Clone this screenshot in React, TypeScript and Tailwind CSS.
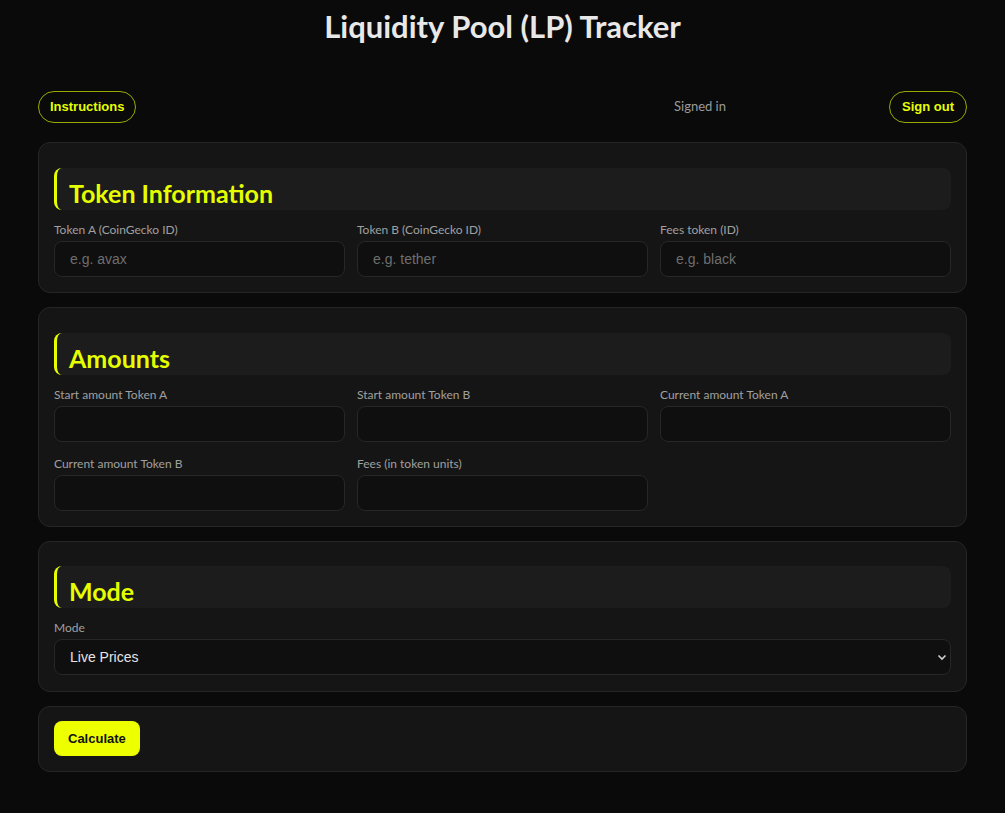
import React from 'react';

const sans = { fontFamily: 'Lato, "Noto Sans", sans-serif' };
const arial = { fontFamily: '"Liberation Sans", Arial, sans-serif' };

const SectionTitle: React.FC<{ title: string }> = ({ title }) => (
    <div className="h-[42px] rounded-lg bg-[#1c1c1c] border-l-[3px] border-[#e6ff00] pl-[12px] flex items-end pb-[2px] mb-[13px]">
        <h2 className="text-[25px] leading-[30px] font-bold text-[#e6ff00]" style={sans}>{title}</h2>
    </div>
);

const Field: React.FC<{ label: string; placeholder?: string }> = ({ label, placeholder }) => (
    <div className="flex flex-col">
        <label className="text-[12px] leading-[14px] text-[#a0a0a0] mb-[4px]" style={sans}>{label}</label>
        <input
            placeholder={placeholder}
            className="h-[36px] rounded-lg bg-[#0f0f0f] border border-[#272727] px-[15px] text-[14px] text-[#e5e5e5] placeholder-[#6e6e6e] outline-none"
            style={arial}
        />
    </div>
);

const Card: React.FC<{ children: React.ReactNode; className?: string }> = ({ children, className }) => (
    <section className={`rounded-xl bg-[#151515] border border-[#262626] px-[15px] ${className ?? ''}`}>
        {children}
    </section>
);

const App: React.FC = () => {
    return (
        <div className="min-h-[813px] bg-[#0a0a0a] text-[#e5e5e5]">
            <div className="w-[929px] ml-[38px]">
                <h1 className="text-center text-[31px] leading-[40px] font-bold text-[#e8e8e8] pt-[6px]" style={sans}>
                    Liquidity Pool (LP) Tracker
                </h1>

                <div className="flex items-center justify-between mt-[45px]">
                    <button
                        className="h-[32px] px-[11px] rounded-full border border-[#9aaa00] text-[#e6ff00] text-[13px] font-bold"
                        style={arial}
                    >
                        Instructions
                    </button>
                    <div className="flex items-center gap-[163px]">
                        <span className="text-[13px] text-[#9a9a9a]" style={sans}>Signed in</span>
                        <button
                            className="h-[32px] px-[12px] rounded-full border border-[#9aaa00] text-[#e6ff00] text-[13px] font-bold"
                            style={arial}
                        >
                            Sign out
                        </button>
                    </div>
                </div>

                <div className="flex flex-col gap-[14px] mt-[19px] pb-[40px]">
                    <Card className="pt-[25px] pb-[15px]">
                        <SectionTitle title="Token Information" />
                        <div className="grid grid-cols-3 gap-x-[12px]">
                            <Field label="Token A (CoinGecko ID)" placeholder="e.g. avax" />
                            <Field label="Token B (CoinGecko ID)" placeholder="e.g. tether" />
                            <Field label="Fees token (ID)" placeholder="e.g. black" />
                        </div>
                    </Card>

                    <Card className="pt-[25px] pb-[15px]">
                        <SectionTitle title="Amounts" />
                        <div className="grid grid-cols-3 gap-x-[12px] gap-y-[15px]">
                            <Field label="Start amount Token A" />
                            <Field label="Start amount Token B" />
                            <Field label="Current amount Token A" />
                            <Field label="Current amount Token B" />
                            <Field label="Fees (in token units)" />
                        </div>
                    </Card>

                    <Card className="pt-[24px] pb-[16px]">
                        <SectionTitle title="Mode" />
                        <div className="flex flex-col">
                            <label className="text-[12px] leading-[14px] text-[#a0a0a0] mb-[4px]" style={sans}>Mode</label>
                            <div className="relative">
                                <select
                                    className="w-full h-[36px] appearance-none rounded-lg bg-[#0f0f0f] border border-[#272727] pl-[15px] text-[14px] text-[#e5e5e5] outline-none"
                                    style={arial}
                                    defaultValue="live"
                                >
                                    <option value="live">Live Prices</option>
                                    <option value="manual">Manual Prices</option>
                                </select>
                                <svg className="absolute right-[4px] top-[13px] pointer-events-none" width="10" height="10" viewBox="0 0 10 10" fill="none">
                                    <path d="M1.5 3.5 L5 7 L8.5 3.5" stroke="#d0d0d0" strokeWidth="1.6" />
                                </svg>
                            </div>
                        </div>
                    </Card>

                    <Card className="pt-[14px] pb-[15px]">
                        <button
                            className="h-[35px] px-[14px] rounded-lg bg-[#eeff00] text-[#111] text-[13px] font-bold"
                            style={arial}
                        >
                            Calculate
                        </button>
                    </Card>
                </div>
            </div>
        </div>
    );
};

export default App;
